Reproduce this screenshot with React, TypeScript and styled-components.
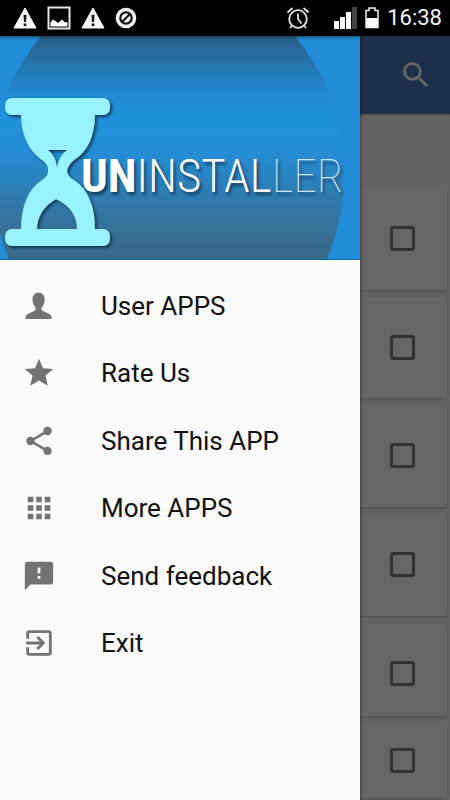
import React from "react";
import styled, { createGlobalStyle } from "styled-components";

const GlobalStyle = createGlobalStyle`
  *, *::before, *::after { box-sizing: border-box; }
  body { margin: 0; background: #000; font-family: Roboto, "Noto Sans", sans-serif; }
`;

const Screen = styled.div`
  display: flex;
  flex-direction: column;
  min-height: 100vh;
`;

const StatusBar = styled.header`
  display: flex;
  align-items: center;
  justify-content: space-between;
  height: 36px;
  padding: 0 8px 0 13px;
  background: #000;
  color: #f4f4f4;
`;

const StatusGroup = styled.div<{ $gap: number }>`
  display: flex;
  align-items: center;
  gap: ${(p) => p.$gap}px;
`;

const AlarmSlot = styled.span`
  display: flex;
  margin-right: 16px;
`;

const Clock = styled.time`
  font-size: 22px;
  line-height: 36px;
`;

const Stage = styled.div`
  display: grid;
  flex: 1;
  grid-template: minmax(0, 1fr) / minmax(0, 1fr);
  & > * { grid-area: 1 / 1; }
`;

const AppPage = styled.main`
  display: flex;
  flex-direction: column;
  background: #f8f8f8;
`;

const AppBar = styled.div`
  display: flex;
  align-items: center;
  justify-content: flex-end;
  height: 78px;
  padding-right: 17px;
  background: #4676bb;
  box-shadow: 0 1px 2px rgba(0, 0, 0, 0.3);
`;

const IconButton = styled.button`
  display: flex;
  padding: 0;
  border: 0;
  background: none;
  color: #fff;
`;

const CardList = styled.ul`
  display: flex;
  flex-direction: column;
  gap: 7px;
  margin: 0;
  padding: 74px 3px 3px;
  list-style: none;
`;

const Card = styled.li<{ $height: number; $top: number }>`
  display: flex;
  justify-content: flex-end;
  align-items: flex-start;
  height: ${(p) => p.$height}px;
  padding: ${(p) => p.$top}px 32px 0;
  border-radius: 2px;
  background: #fff;
  box-shadow: 0 1px 3px rgba(0, 0, 0, 0.25);
`;

const Check = styled.input`
  appearance: none;
  width: 25px;
  height: 25px;
  margin: 0;
  border: 3px solid #7d7d7d;
  border-radius: 3px;
  &:checked { background: #7d7d7d; }
`;

const Scrim = styled.div`
  z-index: 1;
  background: rgba(0, 0, 0, 0.6);
`;

const Drawer = styled.aside`
  z-index: 2;
  width: 80%;
  background: #fafafa;
  box-shadow: 0 0 3px rgba(0, 0, 0, 0.7);
  clip-path: inset(0 -4px 0 0);
`;

const Banner = styled.div`
  display: grid;
  grid-template-columns: minmax(0, 1fr);
  height: 224px;
  border-bottom: 1px solid #14669c;
  background: #218dd8;
  overflow: hidden;
  & > * { grid-area: 1 / 1; }
`;

const Artwork = styled.svg`
  display: block;
  width: 100%;
  height: 224px;
`;

const Wordmark = styled.h1`
  align-self: start;
  margin: 0;
  padding: 108px 0 0 81px;
  color: #fff;
  font-family: "Roboto Condensed", "Liberation Sans Narrow", Roboto, sans-serif;
  font-size: 47px;
  line-height: 64px;
  font-weight: 300;
  white-space: nowrap;
  text-shadow: 2px 3px 3px rgba(10, 40, 70, 0.75);
`;

const Heavy = styled.span`
  font-weight: 700;
`;

const Thin = styled.span`
  font-weight: 100;
  color: #cfe6f8;
`;

const Menu = styled.ul`
  display: grid;
  grid-template-rows: repeat(6, 1fr);
  height: 405px;
  margin: 12px 0 0;
  padding: 0;
  list-style: none;
`;

const MenuItem = styled.button`
  display: flex;
  align-items: center;
  gap: 45px;
  width: 100%;
  height: 100%;
  padding: 0 22px;
  border: 0;
  background: none;
  color: #111;
  font: 400 26px/32px Roboto, "Noto Sans", sans-serif;
  text-align: left;
`;

const MenuIcon = styled.svg`
  flex: none;
  width: 34px;
  height: 34px;
  fill: #737373;
`;

const items: { label: string; path: string }[] = [
  {
    label: "User APPS",
    path: "M12 2.500c-2.700 0-4.600 2-4.600 4.800 0 2.400.9 4.700 2.100 5.900.3.900.1 1.600-.7 2.100-1.700.9-4.200 1.900-5.300 2.700-.8.600-1 1.600-1 3.200h18.400c0-1.600-.2-2.600-1-3.200-1.100-.8-3.600-1.800-5.300-2.700-.8-.5-1-1.200-.7-2.100 1.200-1.200 2.100-3.500 2.100-5.900 0-2.800-1.900-4.800-4.600-4.800z",
  },
  {
    label: "Rate Us",
    path: "M12 17.270L18.180 21l-1.640-7.030L22 9.240l-7.190-.61L12 2 9.190 8.630 2 9.240l5.460 4.730L5.820 21z",
  },
  {
    label: "Share This APP",
    path: "M18 16.080c-.76 0-1.440.3-1.960.77L8.910 12.700c.05-.23.09-.46.09-.7s-.04-.47-.09-.7l7.050-4.110c.54.5 1.250.81 2.040.81 1.660 0 3-1.340 3-3s-1.340-3-3-3-3 1.340-3 3c0 .24.04.47.09.7L8.040 9.810C7.500 9.310 6.790 9 6 9c-1.660 0-3 1.340-3 3s1.340 3 3 3c.79 0 1.500-.31 2.040-.81l7.120 4.160c-.05.21-.08.43-.08.65 0 1.610 1.310 2.920 2.920 2.920s2.920-1.310 2.920-2.920-1.310-2.920-2.920-2.920z",
  },
  {
    label: "More APPS",
    path: "M4 8h4V4H4v4zm6 12h4v-4h-4v4zm-6 0h4v-4H4v4zm0-6h4v-4H4v4zm6 0h4v-4h-4v4zm6-10v4h4V4h-4zm-6 4h4V4h-4v4zm6 6h4v-4h-4v4zm0 6h4v-4h-4v4z",
  },
  {
    label: "Send feedback",
    path: "M20 2H4c-1.100 0-1.990.9-1.990 2L2 22l4-4h14c1.100 0 2-.9 2-2V4c0-1.100-.9-2-2-2zm-7 12h-2v-2h2v2zm0-4h-2V6h2v4z",
  },
  {
    label: "Exit",
    path: "M10.090 15.590L11.500 17l5-5-5-5-1.410 1.410L12.670 11H3v2h9.670l-2.580 2.590zM19 3H5c-1.110 0-2 .9-2 2v4h2V5h14v14H5v-4H3v4c0 1.100.89 2 2 2h14c1.100 0 2-.9 2-2V5c0-1.100-.9-2-2-2z",
  },
];

const cards = [
  { height: 102, top: 38 },
  { height: 101, top: 38 },
  { height: 102, top: 38 },
  { height: 102, top: 38 },
  { height: 93, top: 38 },
  { height: 75, top: 25 },
];

const Warning = () => (
  <svg width="24" height="24" viewBox="0 0 24 24" aria-hidden="true">
    <path d="M12 2L23 22H1z" fill="#f7f7f7" stroke="#f7f7f7" strokeWidth="1" strokeLinejoin="round" />
    <path d="M10.500 9h3l-.5 7h-2zM10.700 17.500h2.600V20h-2.600z" fill="#111" />
  </svg>
);

const Picture = () => (
  <svg width="24" height="24" viewBox="0 0 24 24" aria-hidden="true">
    <path d="M1.500 1.500h21v21h-21z" fill="none" stroke="#e8e8e8" strokeWidth="2" />
    <path d="M3.500 20.500v-4l2.500-3 2.500 1.500 2.500 2 4-3.500 2.500 2.500 3 .5v4z" fill="#fff" />
  </svg>
);

const Blocked = () => (
  <svg width="22" height="22" viewBox="0 0 22 22" aria-hidden="true">
    <circle cx="11" cy="11" r="10.300" fill="#f5f5f5" />
    <circle cx="11" cy="11" r="5.700" fill="none" stroke="#111" strokeWidth="2.200" />
    <path d="M7 15l8-8" stroke="#111" strokeWidth="2.200" />
  </svg>
);

const Alarm = () => (
  <svg width="24" height="24" viewBox="0 0 24 24" fill="none" stroke="#e4e4e4" strokeWidth="1.800" aria-hidden="true">
    <circle cx="12" cy="13" r="8.800" />
    <path d="M12 7.500V13l3.500 4.500M1.500 6.500l5-4.500M22.500 6.500l-5-4.500M6 19.500L4 22M18 19.500l2 2.500" />
  </svg>
);

const Signal = () => (
  <svg width="23" height="22" viewBox="0 0 23 22" aria-hidden="true">
    <path d="M0 14h5v8H0zM6 10h5v12H6zM12 5h5v17h-5z" fill="#fff" />
    <path d="M18 0h5v22h-5z" fill="#444" />
  </svg>
);

const Battery = () => (
  <svg width="14" height="22" viewBox="0 0 14 22" aria-hidden="true">
    <path d="M1 20.500V3.500h3V1h6v2.500h3v17z" fill="none" stroke="#eee" strokeWidth="1.500" />
    <path d="M1 11h12v10H1z" fill="#fff" />
  </svg>
);

const BannerArt = () => (
  <Artwork viewBox="0 0 360 224" preserveAspectRatio="xMinYMin slice" aria-hidden="true">
    <defs>
      <linearGradient id="disc" gradientUnits="userSpaceOnUse" x1="0" y1="0" x2="0" y2="224">
        <stop offset="0" stopColor="#285f87" />
        <stop offset="0.140" stopColor="#2477b0" />
        <stop offset="0.260" stopColor="#2189d0" />
        <stop offset="0.360" stopColor="#2091dd" />
        <stop offset="0.500" stopColor="#248fd8" />
        <stop offset="0.700" stopColor="#2e7db3" />
        <stop offset="0.880" stopColor="#366f95" />
        <stop offset="1" stopColor="#386a88" />
      </linearGradient>
      <linearGradient id="edge" x1="0" y1="0" x2="0" y2="1">
        <stop offset="0" stopColor="#0d2438" stopOpacity="0.500" />
        <stop offset="1" stopColor="#0d2438" stopOpacity="0" />
      </linearGradient>
      <filter id="drop" x="-10%" y="-10%" width="130%" height="130%">
        <feDropShadow dx="2" dy="2" stdDeviation="1.500" floodColor="#0a2840" floodOpacity="0.800" />
      </filter>
    </defs>
    <ellipse cx="168" cy="138" rx="176" ry="199" fill="url(#disc)" />
    <rect width="360" height="4" fill="url(#edge)" />
    <g filter="url(#drop)" fill="#98f2ff">
      <rect x="5" y="62" width="105" height="17" rx="7" />
      <rect x="5" y="193" width="105" height="17" rx="7" />
      <path
        fillRule="evenodd"
        d="M21 78H95C95 101 87 116 74 124Q67 130 67 136Q69 142 74 144C88 153 95 170 95 194H77C77 179 70 170 56 163C44 170 37 180 37 194H21C21 170 28 153 42 144Q48 140 48 136Q49 129 42 124C30 115 21 101 21 78ZM48 114Q56 120 57 132Q58 121 67 114Z"
      />
    </g>
  </Artwork>
);

export default function App() {
  return (
    <>
      <GlobalStyle />
      <Screen>
        <StatusBar>
          <StatusGroup $gap={10}>
            <Warning />
            <Picture />
            <Warning />
            <Blocked />
          </StatusGroup>
          <StatusGroup $gap={8}>
            <AlarmSlot><Alarm /></AlarmSlot>
            <Signal />
            <Battery />
            <Clock>16:38</Clock>
          </StatusGroup>
        </StatusBar>
        <Stage>
          <AppPage>
            <AppBar>
              <IconButton type="button" aria-label="Search">
                <svg width="34" height="34" viewBox="0 0 24 24" fill="currentColor" aria-hidden="true">
                  <path d="M15.500 14h-.79l-.28-.27C15.410 12.590 16 11.110 16 9.500 16 5.910 13.090 3 9.500 3S3 5.910 3 9.500 5.910 16 9.500 16c1.610 0 3.090-.59 4.230-1.570l.27.28v.79l5 4.990L20.490 19l-4.990-5zm-6 0C7.010 14 5 11.990 5 9.500S7.010 5 9.500 5 14 7.010 14 9.500 11.990 14 9.500 14z" />
                </svg>
              </IconButton>
            </AppBar>
            <CardList>
              {cards.map((card, i) => (
                <Card key={i} $height={card.height} $top={card.top}>
                  <Check type="checkbox" aria-label={`Select app ${i + 1}`} />
                </Card>
              ))}
            </CardList>
          </AppPage>
          <Scrim />
          <Drawer>
            <Banner>
              <BannerArt />
              <Wordmark>
                <Heavy>UN</Heavy>INSTAL<Thin>LER</Thin>
              </Wordmark>
            </Banner>
            <nav>
              <Menu>
                {items.map((item) => (
                  <li key={item.label}>
                    <MenuItem type="button">
                      <MenuIcon viewBox="0 0 24 24" aria-hidden="true">
                        <path d={item.path} />
                      </MenuIcon>
                      {item.label}
                    </MenuItem>
                  </li>
                ))}
              </Menu>
            </nav>
          </Drawer>
        </Stage>
      </Screen>
    </>
  );
}
